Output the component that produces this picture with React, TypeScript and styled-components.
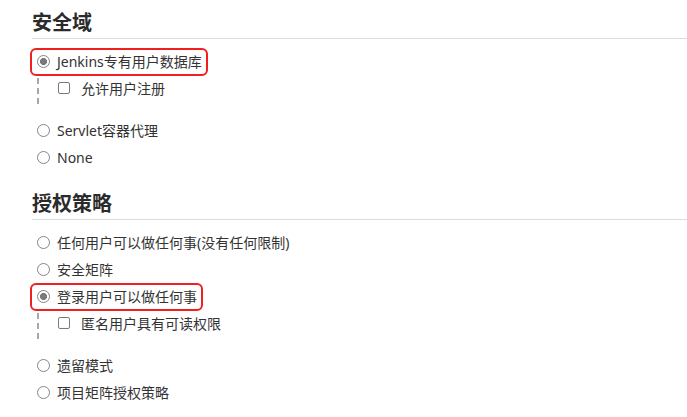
import React from "react";
import styled, { createGlobalStyle } from "styled-components";

interface SubOption {
  label: string;
}

interface OptionData {
  label: string;
  selected?: boolean;
  sub?: SubOption[];
}

interface SectionData {
  title: string;
  options: OptionData[];
}

const sections: SectionData[] = [
  {
    title: "安全域",
    options: [
      { label: "Jenkins专有用户数据库", selected: true, sub: [{ label: "允许用户注册" }] },
      { label: "Servlet容器代理" },
      { label: "None" },
    ],
  },
  {
    title: "授权策略",
    options: [
      { label: "任何用户可以做任何事(没有任何限制)" },
      { label: "安全矩阵" },
      { label: "登录用户可以做任何事", selected: true, sub: [{ label: "匿名用户具有可读权限" }] },
      { label: "遗留模式" },
      { label: "项目矩阵授权策略" },
    ],
  },
];

const GlobalStyle = createGlobalStyle`
  html, body {
    margin: 0;
    background: #fff;
  }
  body {
    font-family: "Segoe UI", "Noto Sans", "Noto Sans CJK SC", sans-serif;
    font-size: 14px;
    color: #333;
  }
`;

const App: React.FC = () => {
  return (
    <>
      <GlobalStyle />
      <Page>
        {sections.map((section, i) => (
          <Section key={section.title} $first={i === 0}>
            <Heading>{section.title}</Heading>
            <OptionList>
              {section.options.map((opt) => (
                <React.Fragment key={opt.label}>
                  <Row>
                    <OptionLabel $highlight={!!opt.selected}>
                      <Radio $checked={!!opt.selected} />
                      <span>{opt.label}</span>
                    </OptionLabel>
                  </Row>
                  {opt.selected && opt.sub && (
                    <Nested>
                      {opt.sub.map((s) => (
                        <SubRow key={s.label}>
                          <Checkbox />
                          <span>{s.label}</span>
                        </SubRow>
                      ))}
                    </Nested>
                  )}
                </React.Fragment>
              ))}
            </OptionList>
          </Section>
        ))}
      </Page>
    </>
  );
};

const Page = styled.div`
  padding-left: 32px;
`;

const Section = styled.section<{ $first: boolean }>`
  padding-top: ${(p) => (p.$first ? "11px" : "21px")};
`;

const Heading = styled.h2`
  margin: 0;
  font-size: 20px;
  line-height: 24px;
  font-weight: bold;
  color: #2b2b2b;
  padding-bottom: 3px;
  border-bottom: 1px solid #dcdcdc;
`;

const OptionList = styled.div`
  padding-top: 9px;
  display: flex;
  flex-direction: column;
`;

const Row = styled.div`
  height: 27px;
  display: flex;
  align-items: center;
`;

const OptionLabel = styled.label<{ $highlight: boolean }>`
  display: inline-flex;
  align-items: center;
  gap: 7px;
  height: 24px;
  padding: 0 4px 0 5px;
  border-radius: 4px;
  outline: ${(p) => (p.$highlight ? "2px solid #f02020" : "none")};
  line-height: 24px;
`;

const Radio = styled.span<{ $checked: boolean }>`
  box-sizing: border-box;
  width: 13px;
  height: 13px;
  border-radius: 50%;
  border: 1px solid #858585;
  background: ${(p) =>
    p.$checked
      ? "radial-gradient(circle, #7a7a7a 0 3.3px, #fff 3.8px)"
      : "#fff"};
  flex-shrink: 0;
`;

const Nested = styled.div`
  margin: 3px 0 13px 5px;
  height: 26px;
  padding-left: 21px;
  background: repeating-linear-gradient(
      to bottom,
      #a8a8a8 0 6px,
      transparent 6px 10px
    )
    left top / 2px 100% no-repeat;
`;

const SubRow = styled.label`
  height: 20px;
  display: flex;
  align-items: center;
  gap: 11px;
`;

const Checkbox = styled.span`
  box-sizing: border-box;
  width: 12px;
  height: 12px;
  border: 1px solid #7a7a7a;
  border-radius: 2px;
  background: #fff;
  flex-shrink: 0;
`;

export default App;
